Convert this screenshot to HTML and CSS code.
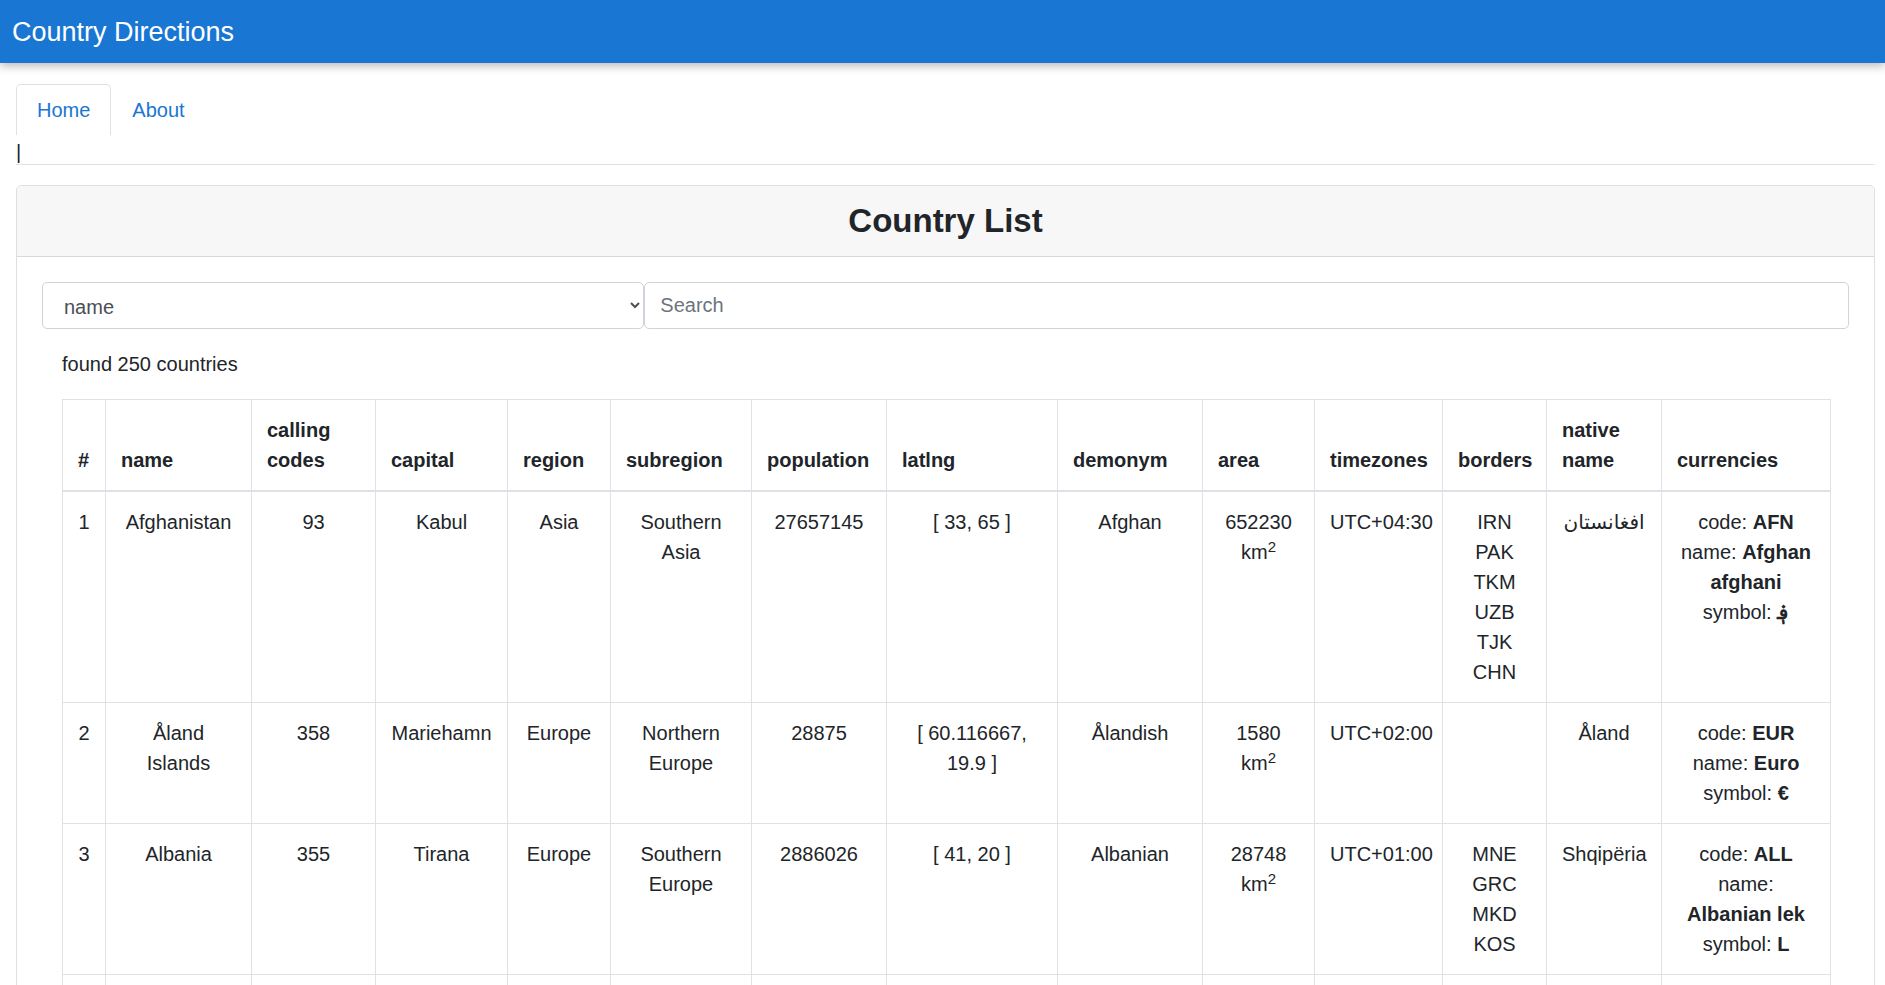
FILE: index.html
```html
<!DOCTYPE html>
<html lang="en">
<head>
<meta charset="utf-8">
<title>Country Directions</title>
<link rel="stylesheet" href="styles.css">
</head>
<body>
<header class="navbar">
  <span class="brand">Country Directions</span>
</header>
<main class="page">
  <div class="tabs-wrap">
    <ul class="tabs">
      <li class="tab active">Home</li>
      <li class="tab">About</li>
    </ul>
    <div class="caret">|</div>
  </div>

  <section class="card">
    <div class="card-header">
      <h3 class="card-title">Country List</h3>
    </div>
    <div class="card-body">
      <div class="filter-row">
        <select class="field select">
          <option>name</option>
          <option>capital</option>
          <option>region</option>
        </select>
        <input class="field input" type="text" placeholder="Search">
      </div>
      <div class="results">
        <p class="count">found 250 countries</p>
        <table class="table">
          <colgroup>
            <col class="c-num">
            <col class="c-name">
            <col class="c-call">
            <col class="c-cap">
            <col class="c-reg">
            <col class="c-sub">
            <col class="c-pop">
            <col class="c-lat">
            <col class="c-dem">
            <col class="c-area">
            <col class="c-tz">
            <col class="c-bor">
            <col class="c-nat">
            <col class="c-cur">
          </colgroup>
          <thead>
            <tr>
              <th>#</th>
              <th>name</th>
              <th>calling codes</th>
              <th>capital</th>
              <th>region</th>
              <th>subregion</th>
              <th>population</th>
              <th>latlng</th>
              <th>demonym</th>
              <th>area</th>
              <th>timezones</th>
              <th>borders</th>
              <th>native name</th>
              <th>currencies</th>
            </tr>
          </thead>
          <tbody>
            <tr>
              <td>1</td>
              <td>Afghanistan</td>
              <td>93</td>
              <td>Kabul</td>
              <td>Asia</td>
              <td>Southern Asia</td>
              <td>27657145</td>
              <td>[ 33, 65 ]</td>
              <td>Afghan</td>
              <td>652230 km<sup>2</sup></td>
              <td>UTC+04:30</td>
              <td><div>IRN</div><div>PAK</div><div>TKM</div><div>UZB</div><div>TJK</div><div>CHN</div></td>
              <td>افغانستان</td>
              <td><div>code: <b>AFN</b></div><div>name: <b>Afghan afghani</b></div><div>symbol: <b>؋</b></div></td>
            </tr>
            <tr>
              <td>2</td>
              <td>Åland Islands</td>
              <td>358</td>
              <td>Mariehamn</td>
              <td>Europe</td>
              <td>Northern Europe</td>
              <td>28875</td>
              <td>[ 60.116667, 19.9 ]</td>
              <td>Ålandish</td>
              <td>1580 km<sup>2</sup></td>
              <td>UTC+02:00</td>
              <td></td>
              <td>Åland</td>
              <td><div>code: <b>EUR</b></div><div>name: <b>Euro</b></div><div>symbol: <b>€</b></div></td>
            </tr>
            <tr>
              <td>3</td>
              <td>Albania</td>
              <td>355</td>
              <td>Tirana</td>
              <td>Europe</td>
              <td>Southern Europe</td>
              <td>2886026</td>
              <td>[ 41, 20 ]</td>
              <td>Albanian</td>
              <td>28748 km<sup>2</sup></td>
              <td>UTC+01:00</td>
              <td><div>MNE</div><div>GRC</div><div>MKD</div><div>KOS</div></td>
              <td>Shqipëria</td>
              <td><div>code: <b>ALL</b></div><div>name: <b>Albanian lek</b></div><div>symbol: <b>L</b></div></td>
            </tr>
            <tr>
              <td>4</td>
              <td>Algeria</td>
              <td>213</td>
              <td>Algiers</td>
              <td>Africa</td>
              <td>Northern Africa</td>
              <td>40400000</td>
              <td>[ 28, 3 ]</td>
              <td>Algerian</td>
              <td>2381741 km<sup>2</sup></td>
              <td>UTC+01:00</td>
              <td><div>TUN</div><div>LBY</div><div>NER</div><div>ESH</div><div>MRT</div><div>MLI</div><div>MAR</div></td>
              <td>الجزائر</td>
              <td><div>code: <b>DZD</b></div><div>name: <b>Algerian dinar</b></div><div>symbol: <b>د.ج</b></div></td>
            </tr>
          </tbody>
        </table>
      </div>
    </div>
  </section>
</main>
</body>
</html>
```
FILE: styles.css
```css
* {
  box-sizing: border-box;
}

html, body {
  margin: 0;
  padding: 0;
  background: #ffffff;
}

body {
  font-family: "Liberation Sans", "DejaVu Sans", Arial, sans-serif;
  font-size: 20px;
  line-height: 30px;
  color: #212529;
}

.navbar {
  position: relative;
  z-index: 2;
  height: 63px;
  background: #1976d2;
  display: flex;
  align-items: center;
  padding-left: 12px;
  box-shadow: 0 3px 9px rgba(0, 0, 0, 0.28);
}

.brand {
  color: #ffffff;
  font-size: 27px;
  line-height: 32px;
}

.page {
  padding: 21px 10px 0 16px;
}

.tabs-wrap {
  border-bottom: 1px solid #dee2e6;
}

.tabs {
  list-style: none;
  margin: 0;
  padding: 0;
  display: flex;
}

.tab {
  padding: 10px 20px;
  line-height: 30px;
  color: #1976d2;
  border: 1px solid transparent;
  border-bottom: 0;
  border-top-left-radius: 5px;
  border-top-right-radius: 5px;
}

.tab.active {
  border-color: #dee2e6;
}

.caret {
  height: 29px;
  padding-left: 0;
  padding-top: 2px;
  line-height: 30px;
  color: #1d2030;
}

.card {
  margin-top: 20px;
  border: 1px solid rgba(0, 0, 0, 0.125);
  border-radius: 5px;
}

.card-header {
  background: #f7f7f7;
  border-bottom: 1px solid rgba(0, 0, 0, 0.125);
  border-radius: 4px 4px 0 0;
  padding: 15px 25px;
}

.card-title {
  margin: 0;
  text-align: center;
  font-size: 33px;
  line-height: 40px;
  font-weight: 700;
  color: #212529;
}

.card-body {
  padding: 25px 25px 25px;
}

.filter-row {
  display: grid;
  grid-template-columns: 1fr 2fr;
}

.field {
  height: 47px;
  font-family: "Liberation Sans", "DejaVu Sans", Arial, sans-serif;
  font-size: 20px;
  color: #495057;
  background: #ffffff;
  border: 1px solid #ced4da;
  border-radius: 5px;
  padding: 7px 15px;
  margin: 0;
  width: 100%;
}

.select {
  padding-left: 17px;
  padding-top: 9px;
}

.input::placeholder {
  color: #6c757d;
}

.results {
  padding: 0 19px 0 20px;
}

.count {
  margin: 20px 0 20px;
}

.table {
  width: 100%;
  table-layout: fixed;
  border-collapse: collapse;
  border: 1px solid #dee2e6;
}

.c-num { width: 43px; }
.c-name { width: 146px; }
.c-call { width: 124px; }
.c-cap { width: 132px; }
.c-reg { width: 103px; }
.c-sub { width: 141px; }
.c-pop { width: 135px; }
.c-lat { width: 171px; }
.c-dem { width: 145px; }
.c-area { width: 112px; }
.c-tz { width: 128px; }
.c-bor { width: 104px; }
.c-nat { width: 115px; }
.c-cur { width: 169px; }

.table th,
.table td {
  border: 1px solid #dee2e6;
  padding: 15px;
  line-height: 30px;
}

.table th {
  text-align: left;
  vertical-align: bottom;
  font-weight: 700;
  border-bottom: 2.5px solid #dee2e6;
}

.table td {
  text-align: center;
  vertical-align: top;
}

.table b {
  font-weight: 700;
}

.table sup {
  font-size: 75%;
  line-height: 0;
  position: relative;
  top: -0.5em;
  vertical-align: baseline;
}
```
